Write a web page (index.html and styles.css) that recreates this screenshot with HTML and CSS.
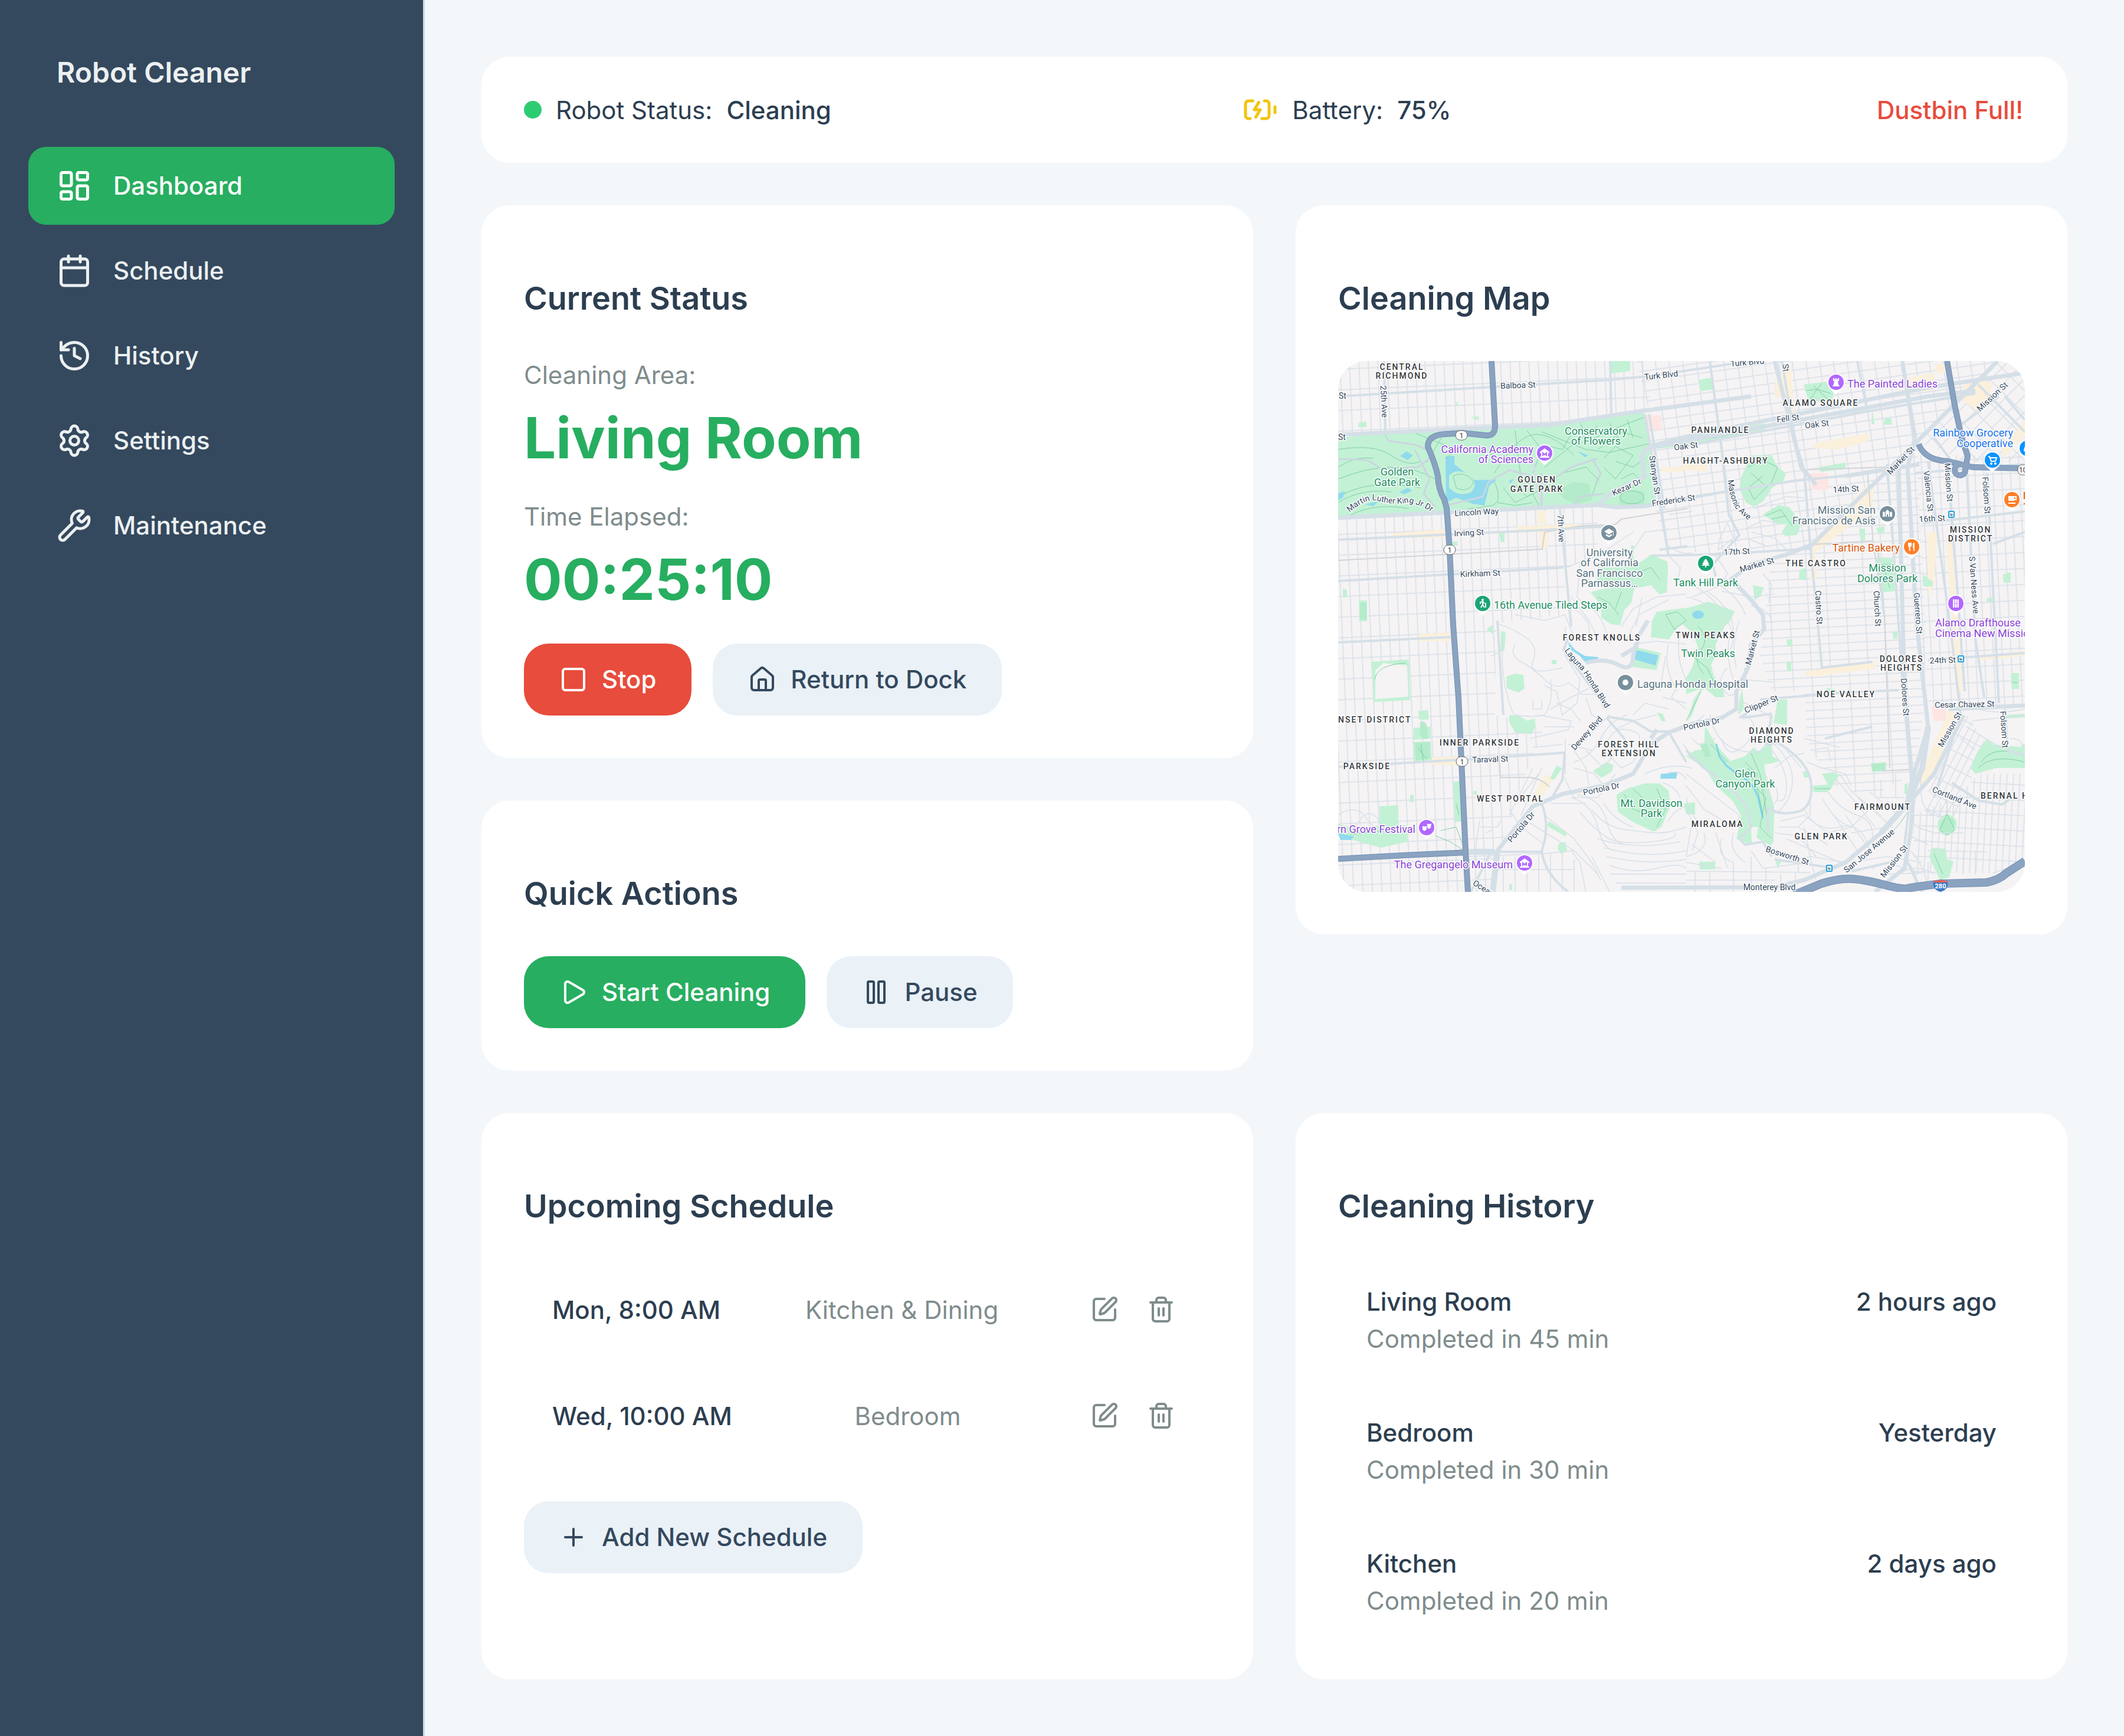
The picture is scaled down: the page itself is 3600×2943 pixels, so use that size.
FILE: index.html
```html
<!DOCTYPE html>
<html lang="en">
<head>
<meta charset="utf-8">
<meta name="viewport" content="width=device-width, initial-scale=1">
<title>Robot Cleaner</title>
<link rel="stylesheet" href="styles.css">
</head>
<body>
<svg class="sprite" aria-hidden="true">
  <symbol id="i-edit" viewBox="0 0 24 24"><path d="M12 3H5a2 2 0 0 0-2 2v14a2 2 0 0 0 2 2h14a2 2 0 0 0 2-2v-7"/><path d="M18.375 2.625a1 1 0 0 1 3 3l-9.013 9.014a2 2 0 0 1-.853.505l-2.873.84a.5.5 0 0 1-.62-.62l.84-2.873a2 2 0 0 1 .506-.852z"/></symbol>
  <symbol id="i-trash" viewBox="0 0 24 24"><path d="M3 6h18"/><path d="M19 6v14a2 2 0 0 1-2 2H7a2 2 0 0 1-2-2V6"/><path d="M8 6V4a2 2 0 0 1 2-2h4a2 2 0 0 1 2 2v2"/><path d="M10 11v6"/><path d="M14 11v6"/></symbol>
</svg>
<div class="app">
  <aside class="sidebar">
    <h1 class="brand">Robot Cleaner</h1>
    <nav class="nav">
      <a class="nav-link nav-link-active" href="#dashboard" aria-current="page">
        <svg class="icon icon-lg" viewBox="0 0 24 24"><rect width="7" height="9" x="3" y="3" rx="1"/><rect width="7" height="5" x="14" y="3" rx="1"/><rect width="7" height="9" x="14" y="12" rx="1"/><rect width="7" height="5" x="3" y="16" rx="1"/></svg>
        <span>Dashboard</span></a>
      <a class="nav-link" href="#schedule">
        <svg class="icon icon-lg" viewBox="0 0 24 24"><path d="M8 2v4"/><path d="M16 2v4"/><rect width="18" height="18" x="3" y="4" rx="2"/><path d="M3 10h18"/></svg>
        <span>Schedule</span></a>
      <a class="nav-link" href="#history">
        <svg class="icon icon-lg" viewBox="0 0 24 24"><path d="M3 12a9 9 0 1 0 9-9 9.75 9.75 0 0 0-6.74 2.74L3 8"/><path d="M3 3v5h5"/><path d="M12 7v5l4 2"/></svg>
        <span>History</span></a>
      <a class="nav-link" href="#settings">
        <svg class="icon icon-lg" viewBox="0 0 24 24"><path d="M9.671 4.136a2.34 2.34 0 0 1 4.659 0 2.34 2.34 0 0 0 3.319 1.915 2.34 2.34 0 0 1 2.33 4.033 2.34 2.34 0 0 0 0 3.831 2.34 2.34 0 0 1-2.33 4.033 2.34 2.34 0 0 0-3.319 1.915 2.34 2.34 0 0 1-4.659 0 2.34 2.34 0 0 0-3.32-1.915 2.34 2.34 0 0 1-2.33-4.033 2.34 2.34 0 0 0 0-3.831A2.34 2.34 0 0 1 6.35 6.051a2.34 2.34 0 0 0 3.319-1.915"/><circle cx="12" cy="12" r="3"/></svg>
        <span>Settings</span></a>
      <a class="nav-link" href="#maintenance">
        <svg class="icon icon-lg" viewBox="0 0 24 24"><path d="M14.7 6.3a1 1 0 0 0 0 1.4l1.6 1.6a1 1 0 0 0 1.4 0l3.106-3.105c.32-.322.863-.22.983.218a6 6 0 0 1-8.259 7.057l-7.91 7.91a1 1 0 0 1-2.999-3l7.91-7.91a6 6 0 0 1 7.057-8.259c.438.12.54.662.219.984z"/></svg>
        <span>Maintenance</span></a>
    </nav>
  </aside>

  <main class="main">
    <section class="status-bar" aria-label="Robot status">
      <div class="status-item"><span class="status-dot"></span><span>Robot Status:</span><strong class="status-value">Cleaning</strong></div>
      <div class="status-item status-battery">
        <svg class="icon icon-lg icon-battery" viewBox="0 0 24 24"><path d="m11 7-3 5h4l-3 5"/><path d="M14.856 6H16a2 2 0 0 1 2 2v8a2 2 0 0 1-2 2h-2.935"/><path d="M22 14v-4"/><path d="M5.14 18H4a2 2 0 0 1-2-2V8a2 2 0 0 1 2-2h2.936"/></svg>
        <span>Battery:</span><strong class="status-value">75%</strong></div>
      <div class="status-item status-alert">Dustbin Full!</div>
    </section>

    <div class="grid">
      <div class="stack">
        <section class="card">
          <h2 class="card-title">Current Status</h2>
          <dl class="stats">
            <div><dt>Cleaning Area:</dt><dd>Living Room</dd></div>
            <div><dt>Time Elapsed:</dt><dd>00:25:10</dd></div>
          </dl>
          <div class="actions">
            <button class="btn btn-danger" type="button"><svg class="icon" viewBox="0 0 24 24"><rect width="18" height="18" x="3" y="3" rx="2"/></svg>Stop</button>
            <button class="btn" type="button"><svg class="icon" viewBox="0 0 24 24"><path d="M15 21v-8a1 1 0 0 0-1-1h-4a1 1 0 0 0-1 1v8"/><path d="M3 10a2 2 0 0 1 .709-1.528l7-5.999a2 2 0 0 1 2.582 0l7 5.999A2 2 0 0 1 21 10v9a2 2 0 0 1-2 2H5a2 2 0 0 1-2-2z"/></svg>Return to Dock</button>
          </div>
        </section>
        <section class="card">
          <h2 class="card-title">Quick Actions</h2>
          <div class="actions">
            <button class="btn btn-primary" type="button"><svg class="icon" viewBox="0 0 24 24"><path d="M5 5a2 2 0 0 1 3.008-1.728l11.997 6.998a2 2 0 0 1 .003 3.458l-12 7A2 2 0 0 1 5 19z"/></svg>Start Cleaning</button>
            <button class="btn" type="button"><svg class="icon" viewBox="0 0 24 24"><rect x="14" y="3" width="5" height="18" rx="1"/><rect x="5" y="3" width="5" height="18" rx="1"/></svg>Pause</button>
          </div>
        </section>
      </div>

      <section class="card card-map">
        <h2 class="card-title">Cleaning Map</h2>
        <svg class="map" viewBox="0 0 1164 900" preserveAspectRatio="xMidYMid slice" role="img" aria-label="Map of San Francisco">
          <defs>
            <pattern id="p-sunset" width="16" height="35" patternUnits="userSpaceOnUse" patternTransform="rotate(-2.5)"><path class="st" d="M3 0V35M0 14H16"/></pattern>
            <pattern id="p-nopa" width="23" height="17" patternUnits="userSpaceOnUse" patternTransform="rotate(-8)"><path class="st" d="M3 0V17M0 4H23"/></pattern>
            <pattern id="p-noe" width="32" height="14" patternUnits="userSpaceOnUse" patternTransform="rotate(-3)"><path class="st" d="M6 0V14M0 4H32"/></pattern>
            <pattern id="p-mission" width="15" height="27" patternUnits="userSpaceOnUse" patternTransform="rotate(-3)"><path class="st" d="M3 0V27M0 7H15"/></pattern>
            <pattern id="p-soma" width="28" height="20" patternUnits="userSpaceOnUse" patternTransform="rotate(-45)"><path class="st" d="M3 0V20M0 4H28"/></pattern>
            <pattern id="p-bernal" width="11" height="26" patternUnits="userSpaceOnUse" patternTransform="rotate(3)"><path class="st" d="M3 0V26M0 7H11"/></pattern>
            <pattern id="p-slant" width="11" height="27" patternUnits="userSpaceOnUse" patternTransform="rotate(27)"><path class="st" d="M3 0V27M0 7H11"/></pattern>
            <path id="t-mlk" d="M19 257Q44 235 62 236Q96 245 118 240Q138 243 158 256"/>
            <path id="t-masonic" d="M660 196Q664 240 676 252Q686 263 700 273"/>
            <path id="t-laguna" d="M382 488Q394 508 412 524Q432 556 455 592"/>
            <symbol id="pin" viewBox="-18 -18 36 42" overflow="visible"><path fill="#fff" d="M0 21C-3 16-15 11-15 0A15 15 0 0 1 15 0C15 11 3 16 0 21Z"/><circle r="13"/></symbol>
            <g id="transit"><rect x="-4" y="-5" width="9" height="10" rx="1" fill="#fff" stroke="#1fa3e0" stroke-width="2"/><path d="M-1-2V2H2V0H0" stroke="#31485f" stroke-width="1" fill="none"/></g>
            <g id="museum"><path fill="#fff" d="M-8-2 0-8 8-2V0H6V6H8V8H-8V6H-6V0H-8Z"/><path d="M-3 5V0L0 3 3 0V5" fill="none" stroke="#b267ff" stroke-width="2"/></g>
            <path id="freeways" d="M260 0 266 110Q266 128 250 126L210 122 180 124Q152 126 152 145Q165 175 169 195 170 218 180 235L184 250 189 321 195 448 204 571 209 678 216 831 220 900M0 844 110 838 220 833M1032 0 1045 75 1057 131 1067 161 1063 185M984 141Q994 168 1034 170L1076 180 1164 182M1063 184A9 9 0 1 1 1052 176"/>
            <path id="i280" d="M773 905 819 886Q850 876 873 878T926 888 965 894 1022 886L1099 884Q1120 880 1133 868L1164 848"/>
          </defs>
          <rect width="1164" height="900" fill="#f5f3f4"/>
          <path fill="url(#p-sunset)" d="M0 0H530L527 84 360 107 0 130ZM0 262 440 245V330L385 350V430L268 445 265 600 350 620 310 720 275 830 268 900H0Z"/>
          <path fill="url(#p-nopa)" d="M505 0H1118L980 138 804 311 700 330H630L555 310 533 240 527 84Z"/>
          <path fill="url(#p-noe)" d="M735 335 804 311 980 138 995 440V580L975 700 900 740 830 715 795 640 790 560 735 560 715 500Z"/>
          <path fill="url(#p-mission)" d="M980 160H1164V580L1062 590 1000 600Z"/>
          <path fill="url(#p-soma)" d="M1118 0H1164V170H1060L1020 150 982 138Z"/>
          <path fill="url(#p-slant)" d="M1060 592 1100 650 1040 780 995 770 1010 700Z"/>
          <path fill="url(#p-bernal)" d="M1085 700H1164V845L1120 868H975V770L1055 735Z"/>

          <g class="shop">
            <path d="M92 292 180 285V300H92ZM303 280 408 276V285L358 290 354 318H342L340 290H303ZM337 254H352V276H337ZM136 463 191 460V475H136ZM158 672 204 670V685H158Z"/>
            <path d="M740 35 768 5 772 90 757 95 755 60 740 62ZM806 140 900 122V135L850 150 808 148ZM955 30 1010 20V50L960 55ZM1060 40 1085 28 1110 40 1088 88 1056 66ZM1125 150 1164 100V125L1128 165ZM1012 5H1040V20H1012ZM582 175 625 172V188L582 184ZM548 180H585V188H548Z"/>
            <path d="M890 215 908 210 905 250 808 325 812 370 800 372 806 310ZM998 290H1016L1010 380 1000 400ZM1030 300H1040L1058 562H1050ZM792 526 910 510V521L815 534H792ZM1076 506 1164 490V500L1085 508ZM1035 590 1048 600 1010 700 990 722 985 710Z"/>
            <path d="M350 700 364 708 345 740 330 750 332 735Z"/>
          </g>
          <path class="hosp" d="M522 92H548V116L526 118ZM800 190H831V218H803ZM1005 586H1030V610H1010Z"/>

          <g class="park">
            <path d="M0 130 80 123 268 115 461 93 518 85 528 148 539 231 531 243 474 248 443 245 298 251 183 255 0 264Z"/>
            <path d="M528 140 592 128 724 106V119L592 143 540 149Z"/>
            <path d="M462 0H495V17L463 21ZM611 32 634 28 636 48 615 51ZM789 40 826 35 840 48 838 66 798 70ZM927 97H938V108H924ZM905 80 909 108 904 106ZM962 45 968 62 965 63Z"/>
            <path d="M700 160 735 160 745 180 759 190 755 203 735 215 720 238 705 247 691 240 680 215 684 195Z"/>
            <path d="M720 260 747 244 765 248 785 276 778 295 758 297 752 290 760 277 742 275Z"/>
            <path d="M808 165 815 180 860 172V183L818 188ZM911 333 940 335 944 390 920 392ZM883 285 893 284V304L886 305ZM912 283 926 280V290L915 292ZM782 355 793 350V372L781 370ZM991 362 1008 374V382H991ZM1127 362 1140 358V376H1128ZM1100 402 1110 401V408L1099 409ZM703 380 722 384 716 398 706 406Z"/>
            <path d="M272 289H282V307H276ZM35 104 48 103V112H34ZM191 307 202 306V313H192ZM8 386 15 388V401H8ZM35 406H49V441H36ZM198 69 203 71V79ZM225 95 238 94V101Z"/>
            <path d="M497 312 502 314 500 330 505 345 520 336 530 328 558 340 559 352 557 392 545 396 530 380 500 386 438 384 440 350 484 350 494 332Z"/>
            <path d="M428 392 450 386 502 384 497 410 485 422 478 448 462 446 446 435 446 415Z"/>
            <path d="M540 425 592 418 592 440 575 452 560 472 530 468 532 440Z"/>
            <path d="M582 422 628 408 650 416 672 424 665 440 655 450 648 465 640 480 640 500 632 515 637 535 652 555 655 570 640 570 622 555 614 560 600 600 592 612 602 575 615 555 590 565 588 540 600 520 610 485 600 460 585 448Z"/>
            <path d="M256 451 262 448V463L252 455ZM276 458 284 460 282 490 275 492ZM56 510 120 506 122 575 61 578ZM136 593 153 592V608H137ZM128 622 157 620V640L128 642ZM128 646 157 645 159 676 128 680ZM285 535 300 530 314 532 316 555 306 562 286 555ZM362 507H370V514H362ZM290 600 308 602 320 610 334 606 334 620 328 632 300 630 290 612Z"/>
            <path d="M195 713 206 712 209 780 198 782ZM70 755 102 753V785L118 788 117 815 72 825 0 805V785L20 790 70 788ZM229 729H235V735H229ZM122 736 128 735V748H122ZM357 780 388 800 385 806 354 788ZM374 818 385 815 388 830 378 836 372 826ZM290 887H295V897H290ZM504 485 547 495 540 524 495 518Z"/>
            <path d="M370 686 380 690 366 710 359 708ZM432 695 455 680 467 685 464 696 450 705 446 706ZM490 725 520 716 545 716 560 728 563 755 548 790 535 798 500 782 474 764 472 735ZM540 596 550 598 555 610 549 611Z"/>
            <path d="M622 618 640 650 665 678 690 670 704 655 712 662 728 648 735 650 736 670 750 678 735 682 722 684 726 710 739 755 738 815 733 822 709 808 712 790 700 790 701 820 675 810 680 790 683 770 668 745 640 720 622 690 590 670 605 660 620 658Z"/>
            <path d="M685 555 688 590 678 600 680 575ZM745 574H761V617L738 614ZM760 510H768V526H761ZM760 472H770V484H762ZM828 554 845 558V565H828ZM903 682 929 680V695L905 697ZM787 696 798 694V706H790ZM804 720 830 718 820 700 840 697 850 702 842 712 836 724 828 731 806 731ZM940 460 948 458V471H941ZM1140 529H1154V556H1142ZM960 718 965 715V734H960Z"/>
            <path d="M1100 640 1110 650 1164 655V690L1115 690 1080 700 1072 690 1082 665ZM1017 780Q1035 758 1048 780Q1050 800 1032 805Q1012 800 1017 780ZM1007 825 1030 827 1032 845 1043 848 1036 875 1020 880 1002 840ZM586 750 605 748V769L590 768ZM612 849H639V862H613ZM740 842 752 846 745 860ZM1132 600 1164 598V604L1132 606ZM1158 650H1164V658H1158Z"/>
          </g>
          <path class="land" d="M63 525 76 512 117 516 119 569 63 573Z"/>
          <path class="park-dark" d="M475 221H519V248H478ZM370 220 400 205 425 208 430 235 405 243 385 235ZM37 410H48V438H37ZM139 612Q153 606 152 640Q141 644 139 630ZM130 647 155 646 156 674 132 677ZM904 683 928 682 926 694 906 695ZM1020 785Q1032 765 1045 780Q1046 796 1032 800Q1018 796 1020 785ZM613 650 625 648 632 670 622 672Z"/>
          <g class="water">
            <path d="M182 162 197 161V175L210 185 232 202 269 201 256 212 248 245 228 242 200 232 183 240Z"/>
            <path class="isle" d="M188 195Q196 182 218 190Q240 205 226 222Q205 232 188 215Z"/>
            <path d="M0 224 12 221 8 232 0 236ZM104 222 118 215 125 220 112 226ZM105 161 116 153 127 160 118 168ZM45 243 68 238 60 246ZM406 153 424 160 418 163ZM289 203 298 200 292 208Z"/>
            <path d="M390 476 402 490 418 500 441 502V508L420 512 410 500 392 488ZM506 490 543 499 538 516 502 506ZM547 700 575 697 573 708 546 708ZM0 800 27 806 22 812 4 812Z"/>
            <ellipse cx="610" cy="430" rx="10" ry="7"/>
          </g>
          <path class="creek" d="M641 649 646 670 658 686 671 696 695 712 705 724 712 740 716 758 720 775"/>

          <g class="trail">
            <path d="M0 150Q60 140 90 160T140 170M0 200Q50 180 90 180T165 200M0 180Q30 160 60 165M10 225Q60 200 140 215M0 240Q40 215 90 222M20 262Q60 240 120 250M130 122 200 150 183 165M175 130 150 172"/>
            <path d="M195 195Q215 185 230 205Q220 225 200 215ZM265 190Q300 130 330 125T400 160M300 118 310 200M320 118 345 150 330 190M345 120 420 150 460 155 528 140M350 180 400 140 440 110M410 105 425 135 480 110 520 95M440 150 480 120 515 130M450 165 470 145 500 160 470 200 450 180M470 170 500 180 520 165M480 200 500 190 515 205 490 220M380 190 420 180 440 200 430 230M265 205Q280 240 260 245T220 250M280 215 300 240 330 225 340 245M300 210 320 230 350 215M270 240 300 245 330 240M460 105 480 140M490 100 500 130M400 115 380 150 360 145M250 160 300 150"/>
            <ellipse cx="498" cy="231" rx="20" ry="11"/><path d="M695 180 720 168 745 180 735 205 705 235 695 215 720 195M700 190 725 212M725 262 750 252 770 280M735 268 760 262M793 50 812 48 835 55M800 65 812 48 820 38M806 42 830 65M540 145Q560 130 590 138M600 135 640 130 680 122M690 118 720 112"/>
            <path d="M505 360 530 350 545 370M440 400 460 410 475 430M480 392 470 420M555 430 575 425 590 440 570 455ZM610 450Q630 470 615 490T620 530M600 500 625 520 640 550M925 350 935 385M915 345H940M590 610 615 560M62 540Q65 515 115 512M135 655 150 675M140 650 145 680M200 750 205 770M20 802Q60 800 110 790M174 796 200 790 213 825M165 805 190 815 213 830M485 735 500 760 530 770M540 725 555 760 540 790M500 725 520 745"/>
            <path d="M632 650 660 680M690 680 710 700 705 720 725 740 715 790 735 810M700 665 715 700 725 760 730 800M695 690 712 730 720 770M1090 680Q1110 650 1160 668M1085 690Q1110 665 1164 680M1020 795 1032 768 1045 795 1032 803ZM1010 835 1025 870M965 765Q945 800 905 825M808 725H835M1142 545H1152"/>
          </g>

          <g class="st">
            <path d="M385 430 400 470M388 350Q410 340 440 330M410 345 405 400 425 420M440 330 500 290M500 320 520 290 560 285M560 260 600 255M395 400 425 440 440 470M400 420Q430 440 425 460M420 410Q450 430 460 480M480 450 500 420 540 400 590 395M490 470 510 430 560 405M500 480 540 475 590 480M515 400 505 450"/>
            <path d="M270 445Q300 455 320 470T330 510 380 520M280 470Q275 520 285 560T300 600M300 430 350 440 385 430M300 480Q290 500 310 510T350 540 390 545M360 540Q365 580 350 600M385 450V500L410 540 405 580 380 600 370 560 350 550M350 600Q330 605 300 600M330 575V590H345V575M325 640 390 625 395 610 340 600M350 620H400M360 590 395 570 425 555M410 565 440 565 450 590M420 570 430 600 450 610M370 580 395 590 410 610M390 545 410 560M330 655 380 650"/>
            <path d="M410 650 425 635 460 600M420 660 450 690 480 650M400 680Q430 670 445 640T490 600M400 690 435 700 450 720M425 720 420 690 400 660M455 650Q465 620 490 625T510 640M450 660 480 690 500 680 520 640M470 625 500 610 540 600M500 600 520 580 560 590M380 700 400 740 440 740 470 700M385 640V700M390 650 430 660M360 750 420 750M300 750 340 700M290 770 330 690M310 770 345 690M290 760 310 790 350 820M320 780 400 830 440 870M350 770 400 810 430 850 445 880"/>
            <path d="M395 740Q430 750 440 790T470 830M405 735Q445 740 455 780T490 820M410 765Q440 800 460 810T530 815 570 800M430 760Q450 790 490 795T545 800 590 790M450 750Q470 780 500 790M440 810Q500 830 580 815M450 825Q520 845 590 830M455 840Q520 855 590 845M460 855Q500 870 540 860T590 860M460 870H590M470 885H590M430 840 460 900M395 830 410 850 420 900M560 780Q570 760 590 755M555 700Q580 690 590 710M550 715Q570 720 580 740M520 700Q560 680 600 690"/>
            <path d="M260 500 280 490M240 780Q230 830 235 850M240 790H270L275 780M250 800 262 795M0 770Q20 755 40 765L60 790M30 790Q50 750 70 780M220 840 350 835 400 830M280 840V900M300 840V900M320 838V900M340 836V900M360 835V900M380 833V900M400 845V900M270 862H400"/>
            <path d="M555 310Q580 330 600 325M560 330 580 350 575 380M640 330 660 360 650 380 600 400M600 380Q640 400 660 440T655 500M590 400Q640 410 650 450M640 375Q680 400 690 430M625 390Q670 420 670 460M650 390 700 400 740 395M700 415Q730 420 735 440M720 360 735 380 730 410M645 305 660 275 670 300 645 320ZM690 285 720 270 745 275M700 290 740 300 760 320M690 300 730 315M705 250 730 240 760 230 790 232"/>
            <path d="M660 520Q640 540 655 560T690 540M665 460Q655 500 670 540M680 440Q665 480 675 520M580 460Q570 500 590 540M560 480Q550 520 575 560M555 500 545 560M580 540 565 570 590 590M550 570 590 580M690 540 740 545M680 575 710 590 730 600 735 615M690 600Q720 620 690 650T650 640M630 600Q640 650 680 660T730 650M620 600Q600 620 580 620M600 640 610 650 640 640M585 650 600 670"/>
            <path d="M740 650Q770 680 770 710T750 760 730 740 720 700M735 660Q760 690 760 720T745 745M740 690 765 670 790 665M740 720Q750 740 740 750M760 660 785 690M790 640 850 655M800 660 830 655 835 680M795 680 820 690 860 700 870 720M850 700 870 730 920 770M845 710 870 740 910 790M830 730Q850 760 880 770T905 810M820 740Q840 780 870 790M800 740V770L780 790M790 760Q810 800 850 790T900 830M750 780 790 770 830 800 870 790 900 760M745 790 780 790 830 820M740 800 780 805 810 840M760 810 850 850M790 790 800 840M840 770 880 830M860 770 905 835M870 800 930 790M880 740 940 790M900 730 950 770M910 740H960M920 710V740M945 700V740"/>
            <path d="M590 720 620 760 670 790M590 700Q640 740 680 770M590 740Q600 790 640 790T680 770M590 760 610 800 600 830M600 780 590 840M620 800Q630 830 590 840M650 810Q640 840 670 850M670 800Q660 830 690 850M640 800 660 860M590 850 650 860M590 865 800 867M590 880 740 880M605 865V900M630 865V900M670 850V900M700 840V900M725 860V900M750 870V890M775 868V890M600 820 640 850M700 830 720 860 800 850M760 850 800 840 810 880M780 840V868M800 840 860 850"/>
            <path d="M870 850 930 840 990 850M960 840 980 870 975 900M970 830Q990 850 1000 890M905 860 930 850 960 860M1000 850V880M950 870Q980 850 1010 870M1060 830V870M1080 830V870M990 690Q980 760 1010 770T1030 745 1000 730M960 800 1000 820M975 770H1010M980 790 1010 800 1060 800M1000 830 1100 832M1110 868 1164 850M930 870 990 868M1065 620 1130 660M1055 640 1080 660M1075 610 1164 600M1140 640Q1160 640 1164 660M1085 590Q1120 600 1164 590"/>
          </g>

          <path class="rail" d="M0 338 346 319 350 290 408 280 470 277 480 268 592 250M804 311 905 305M797 184 930 180M897 185 907 310 926 430 935 690M923 695 980 692M204 676 273 672 275 706H325Q345 708 358 722"/>

          <g class="rd rd-sm">
            <path d="M0 60 460 32 524 26 700 0M0 303 340 287 460 280M0 373 350 352 382 350M0 477 190 468M0 688 240 674 384 664M78 0 80 125M376 250 395 450M461 0 463 92M520 90 560 330M527 90 553 250M345 245 330 170M553 240 640 225 592 232 773 203 890 192M630 0 650 150 662 260 680 295 635 345 640 365M752 0 775 135 790 185 800 310 820 520 905 510M880 0 895 75M532 330 640 328 804 318M582 145 900 85 1080 55M545 320 592 314"/>
            <path d="M930 175 940 300 955 520 970 700M915 320 925 430M978 190 1164 175M990 275 1164 255M1000 170 1040 470 1055 600 1010 740M1034 175 1062 560M1066 190 1080 470 1095 570M1100 190 1120 580M825 640 905 620M690 520V545M715 574 860 562 950 558M1000 507 1164 495M680 605 720 580 735 575M1040 715 1085 745 1125 752 1140 742M1130 590 1135 660 1164 668M745 647Q800 680 802 720T775 765 735 760 730 800M735 600 725 650 745 647M685 605 735 598M740 845 830 858M870 865 935 850M1083 83 1133 36M1130 60 1164 100M1085 40 1164 120M1040 120 1120 60M1010 130 1040 170M1110 310 1164 290M970 735 960 820 965 850 990 900"/>
            <path d="M390 470 382 490 456 590M455 605 485 640 490 660M270 440 280 600M456 603 500 610 530 628 560 628M384 664 380 710 360 745M345 750Q360 790 345 830 350 870 390 900M344 832 220 832M560 628 590 680M590 660 620 690 660 720 690 750 700 790 680 810 690 820 720 815 735 840M260 830 225 900"/>
            <path class="parkway" d="M80 125 85 135 130 142 150 150M0 166 50 168 75 184 135 180 155 165M183 245 245 230 255 205 290 185 330 195M410 115 440 140M350 210 395 180 440 165M430 165 445 190 440 205M130 150 155 200 145 225 165 248M345 190V245M400 245 410 230 450 225"/>
          </g>
          <g class="rd rd-md">
            <path d="M0 266 180 257 300 251 440 244 472 248 520 246 592 234M440 244 465 222 520 196 514 160 528 145 570 133M527 147 592 135 1000 60 1080 50M570 133 592 128 1000 45 1164 20M0 125 360 108 520 84 700 60M740 0 770 120 785 180 810 210M956 0 978 130M978 130 965 180 970 260 980 440 1000 620 970 720 965 745M860 195 985 175M950 180 960 560 972 700 972 740"/>
            <path d="M1118 0 980 138 870 245 804 311 760 328 700 345 666 370 700 405 720 430 722 455 700 480 695 520 675 560 675 590 650 605 600 615 560 630 530 650 500 700 450 720 380 734 330 755 270 830 262 900M1035 590 1164 584M1060 600 1010 700 975 740 970 800 960 860 910 900M480 893 740 892 790 880 860 850 920 800 965 750M530 640 540 625M480 500 505 485 510 465 525 440M420 512Q450 502 475 515T500 500L505 480"/>
          </g>
          <path class="rd rd-lg" d="M218 832 265 832M270 830 262 900M1000 620 990 690 965 750 920 800"/>

          <g class="hwy-case"><use href="#freeways"/><use class="hwy-case-lg" href="#i280"/></g>
          <g class="hwy"><use href="#freeways"/><use class="hwy-lg" href="#i280"/></g>

          <g class="shields"><rect x="199" y="118" width="20" height="16" rx="8"/><rect x="179" y="312" width="20" height="16" rx="8"/><rect x="200" y="671" width="20" height="16" rx="8"/><rect x="1152" y="176" width="24" height="17" rx="7"/></g>
          <g class="shield-text"><text x="209" y="131">1</text><text x="189" y="325">1</text><text x="210" y="684">1</text><text x="1154" y="189" text-anchor="start">10</text></g>
          <path d="M1009 881Q1015 882 1021 879Q1027 882 1033 881Q1036 896 1021 900Q1006 896 1009 881Z" fill="#3f7bc8"/><path d="M1009 881Q1015 882 1021 879Q1027 882 1033 881V884H1009Z" fill="#e3645c"/><text x="1021" y="894" class="i280">280</text>
          <use href="#transit" x="1039" y="260"/><use href="#transit" x="1055" y="505"/><use href="#transit" x="832" y="860"/>

          <g class="lbl lbl-st">
            <text x="1" y="64" text-anchor="start">St</text><text x="0" y="134" text-anchor="start">St</text>
            <text transform="translate(305 46) rotate(-2)">Balboa St</text>
            <text transform="translate(548 29) rotate(-6)">Turk Blvd</text>
            <text transform="translate(694 7) rotate(-5)">Turk Blvd</text>
            <text transform="translate(73 69) rotate(87)">25th Ave</text>
            <text transform="translate(754 12) rotate(84)">St</text>
            <text><textPath href="#t-mlk" startOffset="50%">Martin Luther King Jr Dr</textPath></text>
            <text transform="translate(235 261) rotate(-3)">Lincoln Way</text>
            <text transform="translate(222 296) rotate(-3)">Irving St</text>
            <text transform="translate(373 284) rotate(87)">7th Ave</text>
            <text transform="translate(532 194) rotate(82)">Stanyan St</text>
            <text transform="translate(491 218) rotate(-24)">Kezar Dr</text>
            <text transform="translate(569 241) rotate(-8)">Frederick St</text>
            <text transform="translate(590 149) rotate(-7)">Oak St</text>
            <text transform="translate(241 365) rotate(-2)">Kirkham St</text>
            <text transform="translate(763 102) rotate(-7)">Fell St</text>
            <text transform="translate(812 112) rotate(-7)">Oak St</text>
            <text><textPath href="#t-masonic" startOffset="50%">Masonic Ave</textPath></text>
            <text transform="translate(861 222) rotate(-3)">14th St</text>
            <text transform="translate(957 172) rotate(-46)">Market St</text>
            <text transform="translate(1112 64) rotate(-43)">Mission St</text>
            <text transform="translate(996 221) rotate(84)">Valencia St</text>
            <text transform="translate(1030 206) rotate(86)">Mission St</text>
            <text transform="translate(1094 228) rotate(86)">Folsom St</text>
            <text transform="translate(1007 272) rotate(-3)">16th St</text>
            <text transform="translate(676 328) rotate(-3)">17th St</text>
            <text transform="translate(711 350) rotate(-16)">Market St</text>
            <text transform="translate(810 418) rotate(87)">Castro St</text>
            <text transform="translate(909 420) rotate(87)">Church St</text>
            <text transform="translate(978 428) rotate(86)">Guerrero St</text>
            <text transform="translate(1073 380) rotate(86)">S Van Ness Ave</text>
            <text transform="translate(707 487) rotate(-75)">Market St</text>
            <text transform="translate(719 586) rotate(-22)">Clipper St</text>
            <text transform="translate(617 620) rotate(-12)">Portola Dr</text>
            <text transform="translate(1025 512) rotate(-2)">24th St</text>
            <text transform="translate(956 570) rotate(86)">Dolores St</text>
            <text transform="translate(1062 587) rotate(-1)">Cesar Chavez St</text>
            <text transform="translate(1041 627) rotate(-60)">Mission St</text>
            <text transform="translate(1124 625) rotate(86)">Folsom St</text>
            <text transform="translate(1043 745) rotate(22)">Cortland Ave</text>
            <text transform="translate(760 843) rotate(18)">Bosworth St</text>
            <text transform="translate(903 834) rotate(-40)">San Jose Avenue</text>
            <text transform="translate(946 851) rotate(-52)">Mission St</text>
            <text x="731" y="897">Monterey Blvd</text>
            <text><textPath href="#t-laguna" startOffset="50%">Laguna Honda Blvd</textPath></text>
            <text transform="translate(258 680) rotate(-2)">Taraval St</text>
            <text transform="translate(425 634) rotate(-48)">Dewey Blvd</text>
            <text transform="translate(447 730) rotate(-12)">Portola Dr</text>
            <text transform="translate(314 793) rotate(-50)">Portola Dr</text>
            <text transform="translate(244 898) rotate(32)">Ocean</text>
          </g>
          <g class="lbl lbl-area">
            <text x="108" y="15">CENTRAL</text><text x="108" y="30">RICHMOND</text>
            <text x="337" y="206">GOLDEN</text><text x="337" y="222">GATE PARK</text>
            <text x="818" y="76">ALAMO SQUARE</text><text x="648" y="122">PANHANDLE</text><text x="657" y="174">HAIGHT-ASHBURY</text>
            <text x="1072" y="291">MISSION</text><text x="1072" y="306">DISTRICT</text><text x="810" y="348">THE CASTRO</text>
            <text x="623" y="470">TWIN PEAKS</text><text x="447" y="474">FOREST KNOLLS</text>
            <text x="955" y="510">DOLORES</text><text x="955" y="525">HEIGHTS</text><text x="861" y="570">NOE VALLEY</text>
            <text x="735" y="632">DIAMOND</text><text x="735" y="647">HEIGHTS</text>
            <text x="0" y="613" text-anchor="start">NSET DISTRICT</text><text x="49" y="692">PARKSIDE</text><text x="240" y="652">INNER PARKSIDE</text>
            <text x="493" y="655">FOREST HILL</text><text x="493" y="670">EXTENSION</text><text x="292" y="747">WEST PORTAL</text>
            <text x="643" y="790">MIRALOMA</text><text x="923" y="761">FAIRMOUNT</text><text x="819" y="811">GLEN PARK</text><text x="1089" y="742" text-anchor="start">BERNAL H</text>
          </g>
          <g class="lbl lbl-poi">
            <g class="c-green"><text x="437" y="125">Conservatory</text><text x="437" y="142">of Flowers</text><text x="100" y="194">Golden</text><text x="100" y="212">Gate Park</text>
              <text x="264" y="420" text-anchor="start">16th Avenue Tiled Steps</text><text x="623" y="382">Tank Hill Park</text><text x="931" y="357">Mission</text><text x="931" y="375">Dolores Park</text>
              <text x="627" y="502">Twin Peaks</text><text x="690" y="706">Glen</text><text x="690" y="723">Canyon Park</text><text x="531" y="756">Mt. Davidson</text><text x="531" y="773">Park</text></g>
            <g class="c-purple"><text x="331" y="156" text-anchor="end">California Academy</text><text x="331" y="173" text-anchor="end">of Sciences</text><text x="863" y="45" text-anchor="start">The Painted Ladies</text>
              <text x="1012" y="450" text-anchor="start">Alamo Drafthouse</text><text x="1012" y="468" text-anchor="start">Cinema New Missio</text><text x="131" y="800" text-anchor="end">rn Grove Festival</text><text x="296" y="860" text-anchor="end">The Gregangelo Museum</text></g>
            <g class="c-slate"><text x="460" y="331">University</text><text x="460" y="348">of California</text><text x="460" y="366">San Francisco</text><text x="460" y="383">Parnassus…</text>
              <text x="911" y="259" text-anchor="end">Mission San</text><text x="911" y="277" text-anchor="end">Francisco de Asis</text><text x="507" y="554" text-anchor="start">Laguna Honda Hospital</text></g>
            <g class="c-blue"><text x="1144" y="128" text-anchor="end">Rainbow Grocery</text><text x="1144" y="146" text-anchor="end">Cooperative</text></g>
            <g class="c-orange"><text x="952" y="323" text-anchor="end">Tartine Bakery</text></g>
          </g>

          <g class="pins">
            <g transform="translate(350 156)"><use href="#pin" x="-18" y="-18" width="36" height="42" fill="#b267ff"/><use href="#museum"/></g>
            <g transform="translate(316 851)"><use href="#pin" x="-18" y="-18" width="36" height="42" fill="#b267ff"/><use href="#museum"/></g>
            <g transform="translate(844 36)"><use href="#pin" x="-18" y="-18" width="36" height="42" fill="#b267ff"/><path fill="#fff" d="M-5-7H-3V-5H-1V-7H1V-5H3V-7H5V-2H3L4 3 6 7H-6L-4 3-3-2H-5Z"/></g>
            <g transform="translate(1047 411)"><use href="#pin" x="-18" y="-18" width="36" height="42" fill="#b267ff"/><path fill="#fff" d="M-5-7H5V7H-5Z"/><path stroke="#b267ff" stroke-width="1" d="M-2-7V7M2-7V7M-2 0H2"/></g>
            <g transform="translate(150 791)"><use href="#pin" x="-18" y="-18" width="36" height="42" fill="#b267ff"/><path fill="#fff" d="M-7-3-5-2H-2L0-3V3Q-4 8-7 3ZM1-7 3-6H6L8-7 7 0Q4 4 1 0Z"/></g>
            <g transform="translate(459 291)"><use href="#pin" x="-18" y="-18" width="36" height="42" fill="#78909c"/><path fill="#fff" d="M-8-2 0-7 8-2 0 3ZM-5 2 0 5 5 2V5L0 8-5 5ZM7-2H8V5H7Z"/></g>
            <g transform="translate(931 259)"><use href="#pin" x="-18" y="-18" width="36" height="42" fill="#78909c"/><path fill="#fff" d="M-8 5V-2L-6-4-4-2V5ZM-3 5V-4L0-7 3-4V5H1V1H-1V5ZM4 5V-2L6-4 8-2V5Z"/></g>
            <g transform="translate(487 545)"><use href="#pin" x="-18" y="-18" width="36" height="42" fill="#78909c"/><circle r="5" fill="#fff"/></g>
            <g transform="translate(245 411)"><use href="#pin" x="-18" y="-18" width="36" height="42" fill="#1aa573"/><circle cx="0" cy="-6" r="2" fill="#fff"/><path d="M-4-2 0-3 3 0M0-3V2L-3 7M0 2 3 7M5-1V7M-4-3V1" fill="none" stroke="#fff" stroke-width="2"/></g>
            <g transform="translate(623 343)"><use href="#pin" x="-18" y="-18" width="36" height="42" fill="#1aa573"/><path fill="#fff" d="M0-8 4-3H3L6 1H4L7 4H1V7H-1V4H-7L-4 1H-6L-3-3H-4Z"/></g>
            <g transform="translate(1109 168)"><use href="#pin" x="-18" y="-18" width="36" height="42" fill="#0b93ff"/><path d="M-7-6H-5L-2 2H5L7-4H-4" fill="none" stroke="#fff" stroke-width="2"/><circle cx="-2" cy="6" r="2" fill="#fff"/><circle cx="5" cy="6" r="2" fill="#fff"/></g>
            <g transform="translate(1168 148)"><use href="#pin" x="-18" y="-18" width="36" height="42" fill="#0b93ff"/><path fill="#fff" d="M-6 5-5-1 0-7V5Z"/></g>
            <g transform="translate(1142 235)"><use href="#pin" x="-18" y="-18" width="36" height="42" fill="#ff7f27"/><path fill="#fff" d="M-6-6H4V2H-6ZM-6 5H6V7H-6Z"/><path d="M4-5H7V0H4" fill="none" stroke="#fff" stroke-width="2"/></g>
            <g transform="translate(972 315)"><use href="#pin" x="-18" y="-18" width="36" height="42" fill="#ff7f27"/><path d="M-5-7V-2Q-3 1-3 7M-1-7V-2L-3 0M-3-7V0M4-7V7M3-6V1H5" fill="none" stroke="#fff" stroke-width="2"/></g>
            <path d="M1162 222H1164V234H1162ZM1162 241H1164V243H1162Z" fill="#e8620c"/>
          </g>
        </svg>
      </section>

      <section class="card card-list">
        <h2 class="card-title">Upcoming Schedule</h2>
        <ul class="schedule">
          <li class="schedule-row"><span class="strong">Mon, 8:00 AM</span><span class="muted">Kitchen &amp; Dining</span>
            <span class="row-tools"><button class="icon-btn" type="button" aria-label="Edit"><svg class="icon"><use href="#i-edit"/></svg></button><button class="icon-btn" type="button" aria-label="Delete"><svg class="icon"><use href="#i-trash"/></svg></button></span></li>
          <li class="schedule-row"><span class="strong">Wed, 10:00 AM</span><span class="muted">Bedroom</span>
            <span class="row-tools"><button class="icon-btn" type="button" aria-label="Edit"><svg class="icon"><use href="#i-edit"/></svg></button><button class="icon-btn" type="button" aria-label="Delete"><svg class="icon"><use href="#i-trash"/></svg></button></span></li>
        </ul>
        <div class="actions">
          <button class="btn" type="button"><svg class="icon" viewBox="0 0 24 24"><path d="M5 12h14"/><path d="M12 5v14"/></svg>Add New Schedule</button>
        </div>
      </section>

      <section class="card card-list">
        <h2 class="card-title">Cleaning History</h2>
        <ul class="history">
          <li class="history-row"><div class="history-info"><span class="strong">Living Room</span><span class="muted">Completed in 45 min</span></div><time class="strong">2 hours ago</time></li>
          <li class="history-row"><div class="history-info"><span class="strong">Bedroom</span><span class="muted">Completed in 30 min</span></div><time class="strong">Yesterday</time></li>
          <li class="history-row"><div class="history-info"><span class="strong">Kitchen</span><span class="muted">Completed in 20 min</span></div><time class="strong">2 days ago</time></li>
        </ul>
      </section>
    </div>
  </main>
</div>
</body>
</html>
```
FILE: styles.css
```css
* { box-sizing: border-box; }

body {
  margin: 0;
  background: #f4f7fa;
  color: #2c3e50;
  font-family: Inter, "Liberation Sans", sans-serif;
  font-size: 42px;
  line-height: 51px;
}

h1, h2, ul, dl, dd { margin: 0; padding: 0; }
ul { list-style: none; }
button { font: inherit; border: 0; cursor: pointer; }

.sprite { position: absolute; width: 0; height: 0; }

.app { display: flex; min-height: 100vh; }

.icon {
  flex: none;
  width: 48px;
  height: 48px;
  fill: none;
  stroke: currentColor;
  stroke-width: 2;
  stroke-linecap: round;
  stroke-linejoin: round;
}
.icon-lg { width: 60px; height: 60px; }
.icon-battery { color: #f1c40f; }

/* Sidebar */
.sidebar {
  flex: none;
  width: 720px;
  padding: 48px;
  background: #34495e;
  border-right: 3px solid #d0d9e8;
  color: #ecf0f1;
}
.brand {
  padding: 48px 48px 0;
  margin-bottom: 99px;
  font-size: 48px;
  font-weight: 600;
  line-height: 54px;
}
.nav { display: flex; flex-direction: column; gap: 12px; }
.nav-link {
  display: flex;
  align-items: center;
  gap: 36px;
  padding: 36px 48px;
  border-radius: 30px;
  color: inherit;
  font-weight: 500;
  line-height: 50px;
  text-decoration: none;
}
.nav-link-active { background: #27ae60; color: #fff; }

/* Main column */
.main {
  flex: 1;
  min-width: 0;
  padding: 96px;
  display: flex;
  flex-direction: column;
  gap: 72px;
}
.status-bar {
  display: flex;
  align-items: center;
  justify-content: space-between;
  padding: 60px 72px;
  background: #fff;
  border-radius: 48px;
}
.status-item { display: flex; align-items: center; gap: 24px; }
.status-dot { width: 30px; height: 30px; border-radius: 50%; background: #2ecc71; }
.status-value { font-weight: 500; }
.status-battery { padding-right: 24px; }
.status-alert { padding-right: 3px; color: #e74c3c; font-weight: 500; }

.grid {
  display: grid;
  grid-template-columns: repeat(2, minmax(0, 1fr));
  gap: 72px;
}
.stack { display: flex; flex-direction: column; gap: 72px; }
.card { padding: 72px; background: #fff; border-radius: 48px; }
.card-map { align-self: start; }
.card-title {
  margin: 45px 0 66px;
  font-size: 54px;
  font-weight: 600;
  line-height: 81px;
}
.card-list .card-title { margin-bottom: 60px; }

.stats { display: flex; flex-direction: column; gap: 52px; margin-bottom: 51px; }
.stats dt { margin-bottom: 24px; color: #7f8c8d; line-height: 48px; }
.stats dd { color: #27ae60; font-size: 96px; font-weight: 700; line-height: 116px; }

.actions { display: flex; flex-wrap: wrap; gap: 36px; }
.btn {
  display: inline-flex;
  align-items: center;
  gap: 24px;
  padding: 36px 60px;
  border-radius: 42px;
  background: #eaf1f7;
  color: #34495e;
  font-weight: 500;
  line-height: 50px;
}
.btn-primary { background: #27ae60; color: #fff; }
.btn-danger { background: #e74c3c; color: #fff; }

.strong { font-weight: 500; }
.muted { color: #7f8c8d; }

.schedule { display: flex; flex-direction: column; gap: 30px; margin-bottom: 70px; }
.schedule-row {
  display: flex;
  align-items: center;
  justify-content: space-between;
  padding: 39px 48px;
}
.row-tools { display: flex; gap: 24px; }
.icon-btn { display: flex; padding: 12px; background: none; color: #7f8c8d; }

.history { display: flex; flex-direction: column; gap: 36px; }
.history-row {
  display: flex;
  align-items: flex-start;
  justify-content: space-between;
  padding: 36px 48px;
}
.history-info { display: flex; flex-direction: column; gap: 12px; }

/* Map */
.map { display: block; width: 100%; height: 900px; border-radius: 48px; font-family: Roboto, "Liberation Sans", sans-serif; }
.st { fill: none; stroke: #d8e0e8; stroke-width: 1.5; }
.land { fill: #f5f3f4; }
.shop { fill: #faf0dc; }
.hosp { fill: #fde5e3; }
.park { fill: #c3f1d5; }
.park-dark { fill: #b4ebca; }
.water { fill: #90daee; }
.isle { fill: #c3f1d5; }
.creek { fill: none; stroke: #80d4ee; stroke-width: 3; }
.trail { fill: none; stroke: #7fcea6; stroke-width: 1; }
.rail { fill: none; stroke: #d2d4d7; stroke-width: 2; }
.rd { fill: none; stroke: #d5dfe7; stroke-linejoin: round; }
.rd-sm { stroke-width: 4; }
.rd-md { stroke-width: 7; }
.rd-lg { stroke-width: 10; }
.parkway { stroke: #ccd6e0; stroke-width: 3; }
.hwy-case { fill: none; stroke: #7391b4; stroke-width: 10; stroke-linejoin: round; }
.hwy-case-lg { stroke-width: 14; }
.hwy { fill: none; stroke: #8aa3c1; stroke-width: 8; stroke-linejoin: round; }
.hwy-lg { stroke-width: 12; }
.shields { fill: #fff; stroke: #666; stroke-width: 1; }
.shield-text { fill: #333; font-size: 12px; text-anchor: middle; }
.i280 { fill: #fff; font-size: 11px; font-weight: 700; text-anchor: middle; }
.lbl text { paint-order: stroke; stroke: #fff; stroke-width: 3px; stroke-linejoin: round; }
.lbl { text-anchor: middle; }
.lbl-st { fill: #35495e; font-size: 14px; }
.lbl-area { fill: #33373b; font-size: 14px; font-weight: 500; letter-spacing: 2px; }
.lbl-poi { font-size: 18px; }
.c-green { fill: #1e8e62; }
.c-purple { fill: #8a45d6; }
.c-slate { fill: #587280; }
.c-blue { fill: #1a73e8; }
.c-orange { fill: #d9560b; }
```
